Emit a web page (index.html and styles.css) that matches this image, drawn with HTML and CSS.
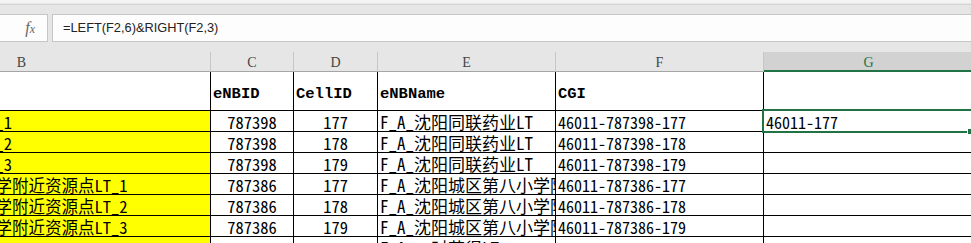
FILE: index.html
```html
<!DOCTYPE html>
<html lang="zh-CN">
<head>
    <meta charset="UTF-8">
    <title>CGI 表</title>
    <link rel="stylesheet" href="styles.css">
</head>
<body>

    <div class="toolbar">
        <div class="formula-row">
            <div class="fx-box"><span class="fx">f<span>x</span></span></div>
            <div class="formula-input">=LEFT(F2,6)&amp;RIGHT(F2,3)</div>
        </div>
    </div>

    <div class="sheet">
        <div class="col-heads">
            <div class="col-head">B</div>
            <div class="col-head">C</div>
            <div class="col-head">D</div>
            <div class="col-head">E</div>
            <div class="col-head">F</div>
            <div class="col-head active">G</div>
        </div>

        <div class="row first">
            <div class="cell blank"></div>
            <div class="cell title">eNBID</div>
            <div class="cell title">CellID</div>
            <div class="cell title">eNBName</div>
            <div class="cell title">CGI</div>
            <div class="cell"></div>
        </div>

        <div class="row">
            <div class="cell name">F_A_沈阳同联药业LT_1</div>
            <div class="cell num">787398</div>
            <div class="cell num">177</div>
            <div class="cell site">F_A_沈阳同联药业LT</div>
            <div class="cell cgi">46011-787398-177</div>
            <div class="cell cgi">46011-177</div>
        </div>
        <div class="row">
            <div class="cell name">F_A_沈阳同联药业LT_2</div>
            <div class="cell num">787398</div>
            <div class="cell num">178</div>
            <div class="cell site">F_A_沈阳同联药业LT</div>
            <div class="cell cgi">46011-787398-178</div>
            <div class="cell"></div>
        </div>
        <div class="row">
            <div class="cell name">F_A_沈阳同联药业LT_3</div>
            <div class="cell num">787398</div>
            <div class="cell num">179</div>
            <div class="cell site">F_A_沈阳同联药业LT</div>
            <div class="cell cgi">46011-787398-179</div>
            <div class="cell"></div>
        </div>
        <div class="row">
            <div class="cell name">F_A_沈阳城区第八小学附近资源点LT_1</div>
            <div class="cell num">787386</div>
            <div class="cell num">177</div>
            <div class="cell site">F_A_沈阳城区第八小学附近资源点LT</div>
            <div class="cell cgi">46011-787386-177</div>
            <div class="cell"></div>
        </div>
        <div class="row">
            <div class="cell name">F_A_沈阳城区第八小学附近资源点LT_2</div>
            <div class="cell num">787386</div>
            <div class="cell num">178</div>
            <div class="cell site">F_A_沈阳城区第八小学附近资源点LT</div>
            <div class="cell cgi">46011-787386-178</div>
            <div class="cell"></div>
        </div>
        <div class="row">
            <div class="cell name">F_A_沈阳城区第八小学附近资源点LT_3</div>
            <div class="cell num">787386</div>
            <div class="cell num">179</div>
            <div class="cell site">F_A_沈阳城区第八小学附近资源点LT</div>
            <div class="cell cgi">46011-787386-179</div>
            <div class="cell"></div>
        </div>
        <div class="row">
            <div class="cell name">F_A_沈阳时代花园LT_1</div>
            <div class="cell num"></div>
            <div class="cell num"></div>
            <div class="cell site">F_A_一时花得LT</div>
            <div class="cell"></div>
            <div class="cell"></div>
        </div>

        <div class="selection"></div>
        <div class="fill-handle"></div>
    </div>

</body>
</html>
```

FILE: styles.css
```css
body {
    margin: 0;
    width: 971px;
    height: 243px;
    overflow: hidden;
    background-color: #ffffff;
}
.toolbar {
    background-color: #e6e6e6;
    border-top: 3px solid #f3f3f3;
    box-sizing: border-box;
    height: 52px;
    padding-top: 1px;
}
.toolbar::before {
    content: "";
    display: block;
    height: 1px;
    background-color: #d4d4d4;
}
.formula-row {
    display: flex;
    gap: 4px;
    margin-top: 9px;
    height: 28px;
}
.fx-box,
.formula-input {
    background-color: #fdfdfd;
    border: 1px solid #c6c6c6;
    box-sizing: border-box;
    height: 28px;
}
.fx-box {
    width: 48px;
    border-left: none;
    text-align: right;
    padding-right: 12px;
}
.fx {
    font-family: "Liberation Serif", serif;
    font-style: italic;
    font-size: 16px;
    line-height: 26px;
    color: #666;
}
.fx span {
    font-size: 12px;
}
.formula-input {
    flex: 1;
    border-right: none;
    padding-left: 10px;
    font-family: "Liberation Sans", Arial, sans-serif;
    font-size: 12.8px;
    line-height: 26px;
    color: #222;
}

.sheet {
    position: relative;
    margin-left: -167px;
    width: 1140px;
}
.col-heads,
.row {
    display: grid;
    grid-template-columns: 378px 83px 84px 178px 208px 210px;
}
.col-head {
    height: 20px;
    box-sizing: border-box;
    background-color: #e6e6e6;
    border-right: 1px solid #c6c6c6;
    border-bottom: 1px solid #a5a5a5;
    text-align: center;
    font-family: "Liberation Serif", serif;
    font-size: 14px;
    line-height: 21px;
    color: #444;
}
.col-head.active {
    background-color: #d2d2d2;
    color: #217346;
    border-bottom: 2px solid #217346;
}

.cell {
    box-sizing: border-box;
    height: 21px;
    border-right: 1px solid #000;
    border-bottom: 1px solid #000;
    padding: 1px 0 0 2px;
    font-family: "Noto Sans Mono CJK SC", "Noto Sans CJK SC", monospace;
    font-size: 16.5px;
    line-height: 20px;
    white-space: nowrap;
    overflow: hidden;
    color: #000;
}
.row.first .cell {
    height: 39px;
}
.cell.title {
    font-family: "Liberation Mono", monospace;
    font-weight: bold;
    font-size: 15.5px;
    line-height: 38px;
    padding-top: 3px;
}
.cell.name {
    background-color: #ffff00;
    padding-left: 14px;
}
.cell.num {
    text-align: center;
    padding-left: 0;
}
.cell.site {
    font-size: 17px;
}
.cell.cgi {
    font-size: 16px;
}

.selection {
    position: absolute;
    left: 929px;
    top: 57px;
    width: 240px;
    height: 24px;
    box-sizing: border-box;
    border: 2px solid #217346;
}
.fill-handle {
    position: absolute;
    left: 1134px;
    top: 76px;
    width: 5px;
    height: 5px;
    background-color: #217346;
    border: 1px solid #ffffff;
}
```
